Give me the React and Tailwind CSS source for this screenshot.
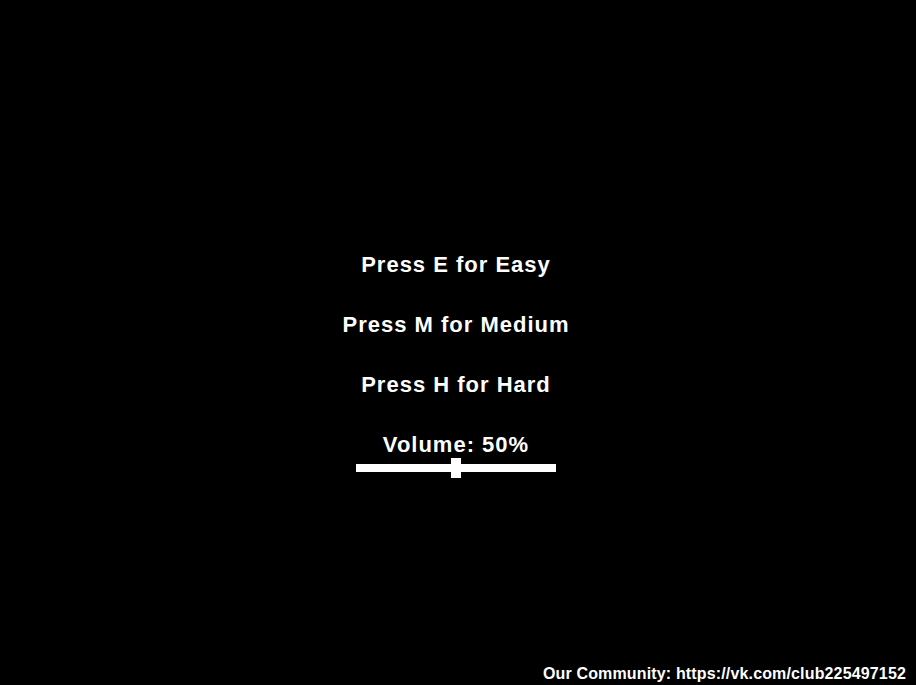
export default function App() {
  return (
    <div className="flex h-[685px] w-full flex-col bg-black text-white font-['Liberation_Sans',Arial,sans-serif] font-bold">
      <div className="flex flex-col items-center pt-[252px] pr-[4px] text-[22px] leading-[25px] tracking-[1px]">
        <p>Press E for Easy</p>
        <p className="mt-[35px]">Press M for Medium</p>
        <p className="mt-[35px]">Press H for Hard</p>
        <p className="mt-[35px]">Volume: 50%</p>
        <div className="relative mt-[1px] flex h-[20px] w-[200px] items-center">
          <div className="h-[8px] w-full bg-white"></div>
          <div className="absolute left-[95px] top-0 h-[20px] w-[10px] bg-white"></div>
        </div>
      </div>
      <p className="mt-auto self-end pb-[2px] pr-[10px] text-[16px] leading-[18px] tracking-[0.15px]">
        Our Community: https://vk.com/club225497152
      </p>
    </div>
  )
}
